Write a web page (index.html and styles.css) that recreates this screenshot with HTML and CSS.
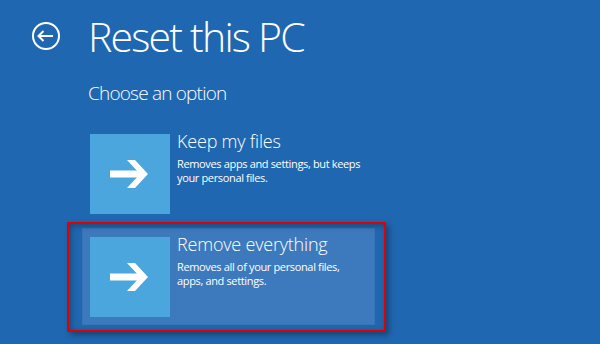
FILE: index.html
```html
<!DOCTYPE html>
<html lang="en">
<head>
<meta charset="UTF-8">
<title>Reset this PC</title>
<link rel="stylesheet" href="styles.css">
</head>
<body>
<div class="header">
    <div class="back">
        <svg width="28" height="28" viewBox="0 0 28 28">
            <circle cx="14" cy="14" r="13" fill="none" stroke="#fff" stroke-width="2"/>
            <path d="M6.5 14 H21 M11.5 9 L6.5 14 L11.5 19" fill="none" stroke="#fff" stroke-width="2"/>
        </svg>
    </div>
    <div class="title">Reset this PC</div>
</div>
<div class="subtitle">Choose an option</div>

<div class="options">
    <div class="option">
        <div class="tile">
            <svg width="80" height="80" viewBox="0 0 80 80">
                <rect x="20" y="36.5" width="31" height="7" fill="#fff"/>
                <polygon points="37,26 45,26 58,40 45,54 37,54 50,40" fill="#fff"/>
            </svg>
        </div>
        <div class="info">
            <div class="name">Keep my files</div>
            <div class="desc">Removes apps and settings, but keeps<br>your personal files.</div>
        </div>
    </div>
    <div class="option selected">
        <div class="tile">
            <svg width="80" height="80" viewBox="0 0 80 80">
                <rect x="20" y="36.5" width="31" height="7" fill="#fff"/>
                <polygon points="37,26 45,26 58,40 45,54 37,54 50,40" fill="#fff"/>
            </svg>
        </div>
        <div class="info">
            <div class="name">Remove everything</div>
            <div class="desc">Removes all of your personal files,<br>apps, and settings.</div>
        </div>
    </div>
</div>

<div class="mark"></div>
</body>
</html>
```

FILE: styles.css
```css
body, html {
    margin:0; padding:0; height:100%;
    background:#2067b1;
    font-family:'Open Sans','Noto Sans',sans-serif;
    color:#fff;
    overflow:hidden;
}
.header {
    display:flex; align-items:center;
    padding:11px 0 0 32px; height:50px;
}
.back {
    width:28px; height:28px; margin-right:28px;
    display:flex;
}
.title {
    font-size:41px; font-weight:300; line-height:50px;
    letter-spacing:-1.8px;
}
.subtitle {
    margin:20px 0 0 88px;
    font-size:19px; font-weight:300; line-height:24px;
    letter-spacing:-0.8px;
}
.options {
    margin:21px 0 0 83px;
    display:flex; flex-direction:column; gap:8px;
    width:291px;
}
.option {
    display:flex; gap:7px;
    padding:8px 7px 7px 7px;
}
.option.selected {
    background:#3d79bd;
    box-shadow:0 0 0 1px #3a74b8;
}
.tile {
    width:80px; height:80px; flex:none;
    background:#4ba6dd;
}
.tile svg { display:block; }
.name {
    margin-top:-4px;
    font-size:18px; font-weight:300; line-height:22px;
    letter-spacing:-0.2px;
}
.desc {
    margin-top:5px;
    font-size:11px; line-height:14px;
    letter-spacing:-0.35px;
    white-space:nowrap;
}
.mark {
    position:absolute; left:67px; top:222px;
    width:315px; height:106px;
    border:2px solid #e00000;
    box-shadow:3px 3px 6px rgba(0,0,0,0.35), inset 2px 2px 6px rgba(0,0,0,0.3);
}
```
